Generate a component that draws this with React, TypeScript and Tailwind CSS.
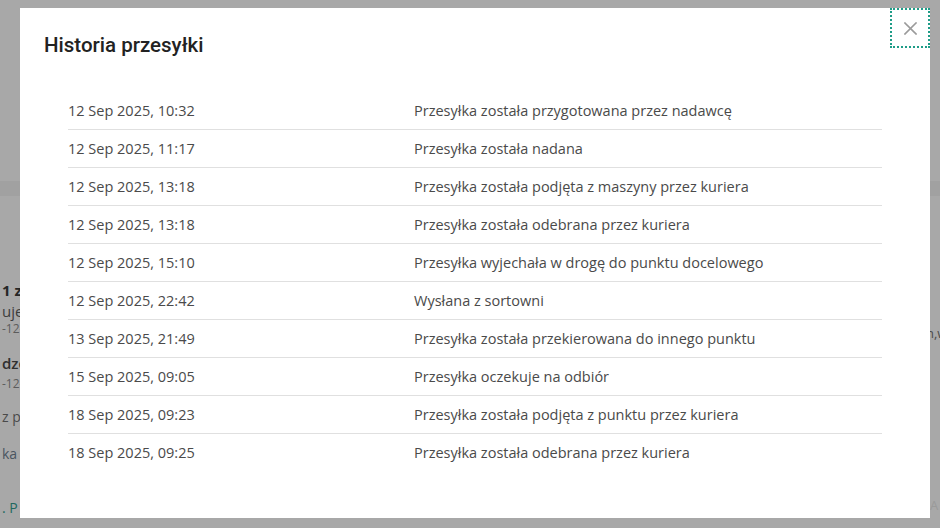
import React from 'react';

const EVENTS: { date: string; text: string }[] = [
    { date: '12 Sep 2025, 10:32', text: 'Przesyłka została przygotowana przez nadawcę' },
    { date: '12 Sep 2025, 11:17', text: 'Przesyłka została nadana' },
    { date: '12 Sep 2025, 13:18', text: 'Przesyłka została podjęta z maszyny przez kuriera' },
    { date: '12 Sep 2025, 13:18', text: 'Przesyłka została odebrana przez kuriera' },
    { date: '12 Sep 2025, 15:10', text: 'Przesyłka wyjechała w drogę do punktu docelowego' },
    { date: '12 Sep 2025, 22:42', text: 'Wysłana z sortowni' },
    { date: '13 Sep 2025, 21:49', text: 'Przesyłka została przekierowana do innego punktu' },
    { date: '15 Sep 2025, 09:05', text: 'Przesyłka oczekuje na odbiór' },
    { date: '18 Sep 2025, 09:23', text: 'Przesyłka została podjęta z punktu przez kuriera' },
    { date: '18 Sep 2025, 09:25', text: 'Przesyłka została odebrana przez kuriera' },
];

// Dimmed page that sits behind the dialog (only its edges show)
const BackgroundPage: React.FC = () => (
    <div className="h-[528px] w-[940px] overflow-hidden bg-[#a8a8a8] font-['Open_Sans',sans-serif] text-[14px]">
        <div className="h-[181px]" />
        <div className="h-[15px] bg-[#a1a1a1]" />
        <div className="flex justify-between">
            <div className="flex w-[60px] flex-col pl-[2px] whitespace-nowrap">
                <div className="h-[83px]" />
                <span className="text-[15px] font-bold leading-[22px] text-[#262626]">1 z 1</span>
                <span className="text-[15px] leading-[20px] text-[#3d3d3d]">uje się</span>
                <span className="text-[12px] leading-[16px] text-[#5c5c5c]">-12-09</span>
                <div className="h-[15px]" />
                <span className="text-[15px] font-semibold leading-[22px] text-[#303030]">dzenie</span>
                <div className="h-[2px]" />
                <span className="text-[12px] leading-[16px] text-[#5c5c5c]">-12-09</span>
                <div className="h-[15px]" />
                <span className="leading-[20px] text-[#4a4a4a]">z pa</span>
                <div className="h-[17px]" />
                <span className="leading-[20px] text-[#4a5560]">ka</span>
                <div className="h-[34px]" />
                <span className="leading-[20px] text-[#22685f]">. P</span>
            </div>
            <div className="flex w-[14px] flex-col whitespace-nowrap">
                <div className="h-[127px]" />
                <span className="text-[13px] leading-[20px] text-[#4a4a4a]">n,w</span>
                <div className="h-[152px]" />
                <span className="pl-[4px] text-[13px] leading-[20px] text-[#9a9a9a]">A</span>
            </div>
        </div>
    </div>
);

const CloseIcon: React.FC = () => (
    <svg width="13" height="13" viewBox="0 0 13 13" className="stroke-[#9b9b9b]" strokeWidth="1.6" strokeLinecap="square">
        <line x1="1" y1="1" x2="12" y2="12" />
        <line x1="12" y1="1" x2="1" y2="12" />
    </svg>
);

export default function App() {
    return (
        <div className="relative h-[528px] w-[940px] overflow-hidden">
            <BackgroundPage />

            {/* Dialog */}
            <div className="absolute left-[20px] top-[8px] h-[510px] w-[910px] bg-white">
                <button
                    type="button"
                    aria-label="Zamknij"
                    className="absolute right-[1px] top-[1px] flex h-[38px] w-[38px] items-center justify-center outline-2 outline-dotted outline-[#1e9c87] -outline-offset-1"
                >
                    <CloseIcon />
                </button>

                <div className="px-[24px] pt-[24px]">
                    <h2 className="font-['Roboto',sans-serif] text-[20.5px] font-medium leading-[26px] text-[#222222]">
                        Historia przesyłki
                    </h2>
                </div>

                <div className="mx-[48px] mt-[34px] font-['Open_Sans',sans-serif] text-[14.5px] text-[#4a4a4a]">
                    {EVENTS.map((ev, i) => (
                        <div
                            key={i}
                            className={`grid h-[38px] grid-cols-[346px_1fr] items-center ${i < EVENTS.length - 1 ? 'border-b border-[#e0e0e0]' : ''}`}
                        >
                            <span>{ev.date}</span>
                            <span>{ev.text}</span>
                        </div>
                    ))}
                </div>
            </div>
        </div>
    );
}
